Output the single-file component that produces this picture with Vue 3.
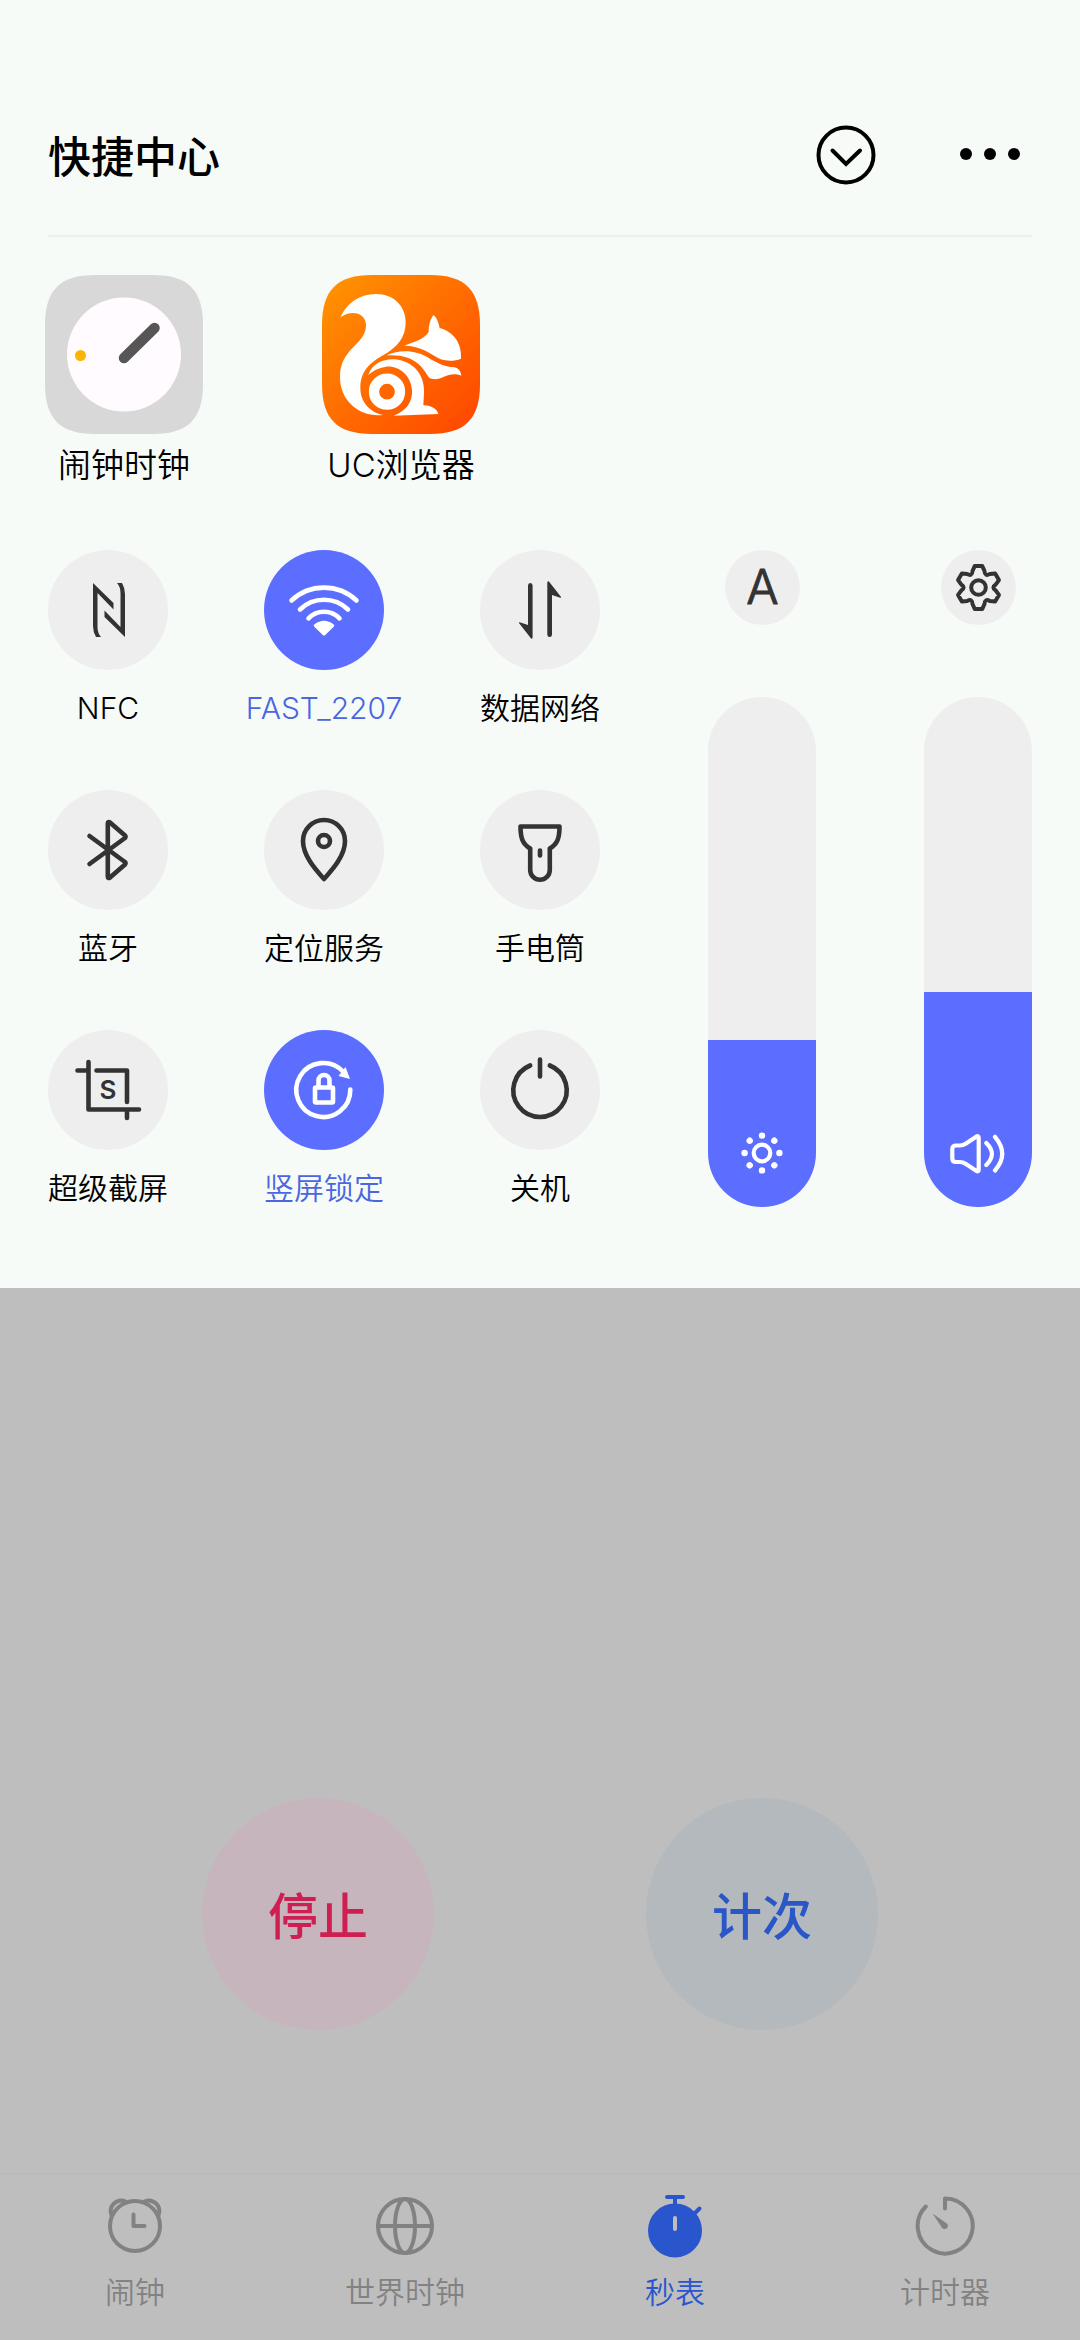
<script setup>
import { ref } from 'vue'

const tiles = ref([
  { id: 'nfc', label: 'NFC', on: false },
  { id: 'wifi', label: 'FAST_2207', on: true },
  { id: 'data', label: '数据网络', on: false },
  { id: 'bluetooth', label: '蓝牙', on: false },
  { id: 'location', label: '定位服务', on: false },
  { id: 'torch', label: '手电筒', on: false },
  { id: 'capture', label: '超级截屏', on: false },
  { id: 'rotation', label: '竖屏锁定', on: true },
  { id: 'power', label: '关机', on: false }
])

const brightness = ref(167)
const volume = ref(215)
const sliderMax = 510
const fill = (value) => ({ '--fill': (value / sliderMax) * 100 + '%' })

const tabs = [
  { id: 'alarm', label: '闹钟' },
  { id: 'world', label: '世界时钟' },
  { id: 'stopwatch', label: '秒表' },
  { id: 'timer', label: '计时器' }
]
const activeTab = ref('stopwatch')

// Six-toothed gear outline around the origin
const gearPath = (() => {
  const at = (x, y, k) => {
    const a = (k * Math.PI) / 3
    return `${(x * Math.cos(a) - y * Math.sin(a)).toFixed(2)} ${(x * Math.sin(a) + y * Math.cos(a)).toFixed(2)}`
  }
  let d = ''
  for (let k = 0; k < 6; k++) {
    d += `${k ? 'L' : 'M'}${at(-3.8, -21.4, k)}L${at(3.8, -21.4, k)}L${at(6, -16.5, k)}Q${at(6.2, -10.8, k)} ${at(11.3, -13.45, k)}`
  }
  return d + 'Z'
})()
</script>

<template>
  <div class="screen">
    <section class="panel">
      <header class="header">
        <h1>快捷中心</h1>
        <div class="actions">
          <button type="button" aria-label="收起">
            <svg width="60" height="60" viewBox="0 0 60 60" fill="none" stroke="#000" stroke-width="4">
              <circle cx="30" cy="30" r="27.5" />
              <path d="M16.5 25.5L30 39L44 25.5" stroke-linecap="round" />
            </svg>
          </button>
          <button type="button" aria-label="更多">
            <svg width="60" height="60" viewBox="0 0 60 60">
              <circle cx="6" cy="29" r="6" /><circle cx="30" cy="29" r="6" /><circle cx="54" cy="29" r="6" />
            </svg>
          </button>
        </div>
      </header>

      <nav class="apps">
        <a class="app" href="#clock">
          <svg width="158" height="159" viewBox="0 0 158 159">
            <path d="M0 50C0 15 15 0 50 0H108C143 0 158 15 158 50V109C158 144 143 159 108 159H50C15 159 0 144 0 109Z" fill="#d8d8d8" />
            <circle cx="79" cy="79.500" r="57" fill="#fffbff" />
            <path d="M79 83L109.500 53" stroke="#555655" stroke-width="10.500" stroke-linecap="round" />
            <circle cx="35.500" cy="80.500" r="5.500" fill="#fbb409" />
          </svg>
          <span>闹钟时钟</span>
        </a>
        <a class="app" href="#browser">
          <svg width="158" height="159" viewBox="66 46 474 477">
            <defs>
              <linearGradient id="orange" x1="0" y1="0" x2="1" y2="1">
                <stop offset="0.05" stop-color="#ff9200" />
                <stop offset="0.5" stop-color="#ff6c00" />
                <stop offset="0.95" stop-color="#ff4800" />
              </linearGradient>
            </defs>
            <path d="M66 196C66 91 111 46 216 46H390C495 46 540 91 540 196V373C540 478 495 523 390 523H216C111 523 66 478 66 373Z" fill="url(#orange)" />
            <g fill="#fff">
              <path d="M121 173C142 128 180 103 228 103C282 103 317 140 317 188C317 235 290 261 262 279C220 303 181 325 181 385C181 425 208 458 250 466C180 474 120 425 120 352C120 265 198 255 198 197C198 160 155 148 121 173Z" />
              <path d="M312 258C345 246 375 237 386 216C386 195 392 175 401 166C411 175 416 190 419 205C460 216 486 250 483 297C465 305 440 305 422 299C390 283 365 258 312 258Z" />
              <path d="M260 287C300 268 350 272 385 294C420 315 438 321 460 322C476 324 483 336 484 348C465 340 448 344 432 351C418 359 400 361 388 355C368 325 348 283 260 287Z" />
              <path d="M205 346C218 310 250 297 285 299C340 305 375 345 372 400L370 437C395 436 412 450 415 463L280 468C320 455 338 425 336 392C333 345 295 317 258 321C235 325 218 333 205 346Z" />
            </g>
            <circle cx="261" cy="396" r="39" fill="none" stroke="#fff" stroke-width="31" />
          </svg>
          <span>UC浏览器</span>
        </a>
      </nav>

      <div class="controls">
        <div class="tiles">
          <button
            v-for="tile in tiles"
            :key="tile.id"
            type="button"
            class="tile"
            :class="{ on: tile.on }"
            :aria-pressed="tile.on"
            @click="tile.on = !tile.on"
          >
            <svg class="disc" viewBox="0 0 120 120">
              <g v-if="tile.id === 'nfc'" class="solid">
                <path d="M45 33L65.500 53V59.500L49.500 43V77Q49.500 83 53 87H48Q45 82 45 76Z" />
                <path d="M45 33L65.500 53V59.500L49.500 43V77Q49.500 83 53 87H48Q45 82 45 76Z" transform="rotate(180 61 60)" />
              </g>
              <g v-else-if="tile.id === 'wifi'">
                <path d="M27.500 50.500A47.500 47.500 0 0 1 92.500 50.500M36 59.500A34.500 34.500 0 0 1 84 59.500M44.500 68.300A21.500 21.500 0 0 1 75.500 68.300" />
                <path class="solid" d="M50.300 76.800Q49 75.500 50.300 74.500Q60 67 69.700 74.500Q71 75.500 69.700 76.800L61 85.200Q60 86 59 85.200Z" />
              </g>
              <g v-else-if="tile.id === 'data'" class="solid">
                <path d="M48 35.500Q48 33 50.300 33Q52.600 33 52.600 35.500V87.500Q52 90 50.300 87.500L39.300 73.500Q38.200 71.500 40.500 72.500L48 75Z" />
                <path d="M67.300 32.500Q68 30 69.700 32.500L80.700 46.500Q81.800 48.500 79.500 47.500L72 45V84.500Q72 87 69.700 87Q67.300 87 67.300 84.500Z" />
              </g>
              <path v-else-if="tile.id === 'bluetooth'" d="M41.500 46L77 72Q78 73.300 77 74.500L62 87.500Q59.800 89 59.800 86.500V33.500Q59.800 31 62 32.500L77 45.500Q78 46.700 77 48L41.500 74" />
              <g v-else-if="tile.id === 'location'">
                <path d="M60 89C52 80 39 66 39 51A21 21 0 0 1 81 51C81 66 68 80 60 89Z" />
                <circle cx="60" cy="51" r="6" />
              </g>
              <g v-else-if="tile.id === 'torch'">
                <path d="M40.500 36.500H79.500C79.500 48 77.500 54 69.800 58.500V80A9.800 9.800 0 0 1 50.200 80V58.500C42.500 54 40.500 48 40.500 36.500Z" />
                <path d="M60 60.500V65.500" />
              </g>
              <g v-else-if="tile.id === 'capture'">
                <path d="M29.500 40.500H38M40.500 32V79.500H91M48.500 40.500H79V72M79 82V88" />
                <text x="60" y="69" text-anchor="middle">S</text>
              </g>
              <g v-else-if="tile.id === 'rotation'">
                <path d="M86.300 59.500A27 27 0 1 1 79 41.500" />
                <path class="solid" d="M81.500 37L86 49L74.500 46Z" />
                <rect x="51" y="57.500" width="18" height="15" rx="1" />
                <path d="M54.500 57V50.500A5.500 5.500 0 0 1 65.500 50.500V57" />
              </g>
              <path v-else d="M50.200 35.500A26.700 26.700 0 1 0 69.800 35.500M60 29.500V46.500" />
            </svg>
            <span>{{ tile.label }}</span>
          </button>
        </div>

        <div class="sliders">
          <div class="channel">
            <button type="button" class="mini" aria-label="自动亮度">
              <svg width="75" height="75" viewBox="0 0 75 75">
                <text class="auto" x="37.500" y="54" text-anchor="middle">A</text>
              </svg>
            </button>
            <div class="track">
              <input v-model.number="brightness" type="range" min="0" :max="sliderMax" :style="fill(brightness)" aria-label="亮度" />
              <svg class="glyph" width="60" height="48" viewBox="-30 -24 60 48">
                <circle r="8.300" fill="none" stroke="#fff" stroke-width="4.200" />
                <circle v-for="n in 8" :key="n" cx="17.400" r="3.200" fill="#fff" :transform="`rotate(${n * 45})`" />
              </svg>
            </div>
          </div>
          <div class="channel">
            <button type="button" class="mini" aria-label="设置">
              <svg width="75" height="75" viewBox="-37.500 -37.500 75 75" fill="none" stroke="#333" stroke-width="4" stroke-linejoin="round">
                <path :d="gearPath" />
                <circle r="7.300" />
              </svg>
            </button>
            <div class="track">
              <input v-model.number="volume" type="range" min="0" :max="sliderMax" :style="fill(volume)" aria-label="音量" />
              <svg class="glyph" width="60" height="48" viewBox="0 0 60 48" fill="none" stroke="#fff" stroke-width="4.200" stroke-linecap="round" stroke-linejoin="round">
                <path d="M4.300 20Q4.300 16.500 8 16.500H12Q15 16.500 18 14.500L28.500 7.500Q30.700 6.500 30.700 9V40.500Q30.700 43 28.500 42L18 35Q15 33 12 33H8Q4.300 33 4.300 29.500Z" />
                <path d="M38.300 14Q49.500 25 38.300 36M47 7.800Q61.500 25 47 41.500" />
              </svg>
            </div>
          </div>
        </div>
      </div>
    </section>

    <main class="stopwatch">
      <button type="button" class="round stop">停止</button>
      <button type="button" class="round lap">计次</button>
    </main>

    <nav class="tabs">
      <a
        v-for="tab in tabs"
        :key="tab.id"
        :href="'#' + tab.id"
        :class="{ active: tab.id === activeTab }"
        @click.prevent="activeTab = tab.id"
      >
        <svg width="64" height="64" viewBox="0 0 64 64">
          <g v-if="tab.id === 'alarm'">
            <circle cx="32" cy="32" r="25" />
            <path d="M8.500 21A10.500 10.500 0 0 1 22.500 7.500M55.500 21A10.500 10.500 0 0 0 41.500 7.500M30.500 20.500V32H41.500" />
          </g>
          <g v-else-if="tab.id === 'world'">
            <circle cx="32" cy="32" r="27" />
            <ellipse cx="32" cy="32" rx="10" ry="27" />
            <path d="M5 32H59" />
          </g>
          <g v-else-if="tab.id === 'stopwatch'">
            <circle cx="32" cy="36.500" r="25" fill="currentColor" />
            <path d="M24 3H40M32 3V12M51 20L56.500 14.500" />
            <path d="M32 24V35" stroke="#bebebe" />
          </g>
          <g v-else>
            <path d="M32 14.500V4.500A27.500 27.500 0 1 1 12.800 12.500" />
            <path d="M19.500 19.500L34.500 30Q35.800 32.500 34 34.300Q32 35.800 29.500 34.500Z" fill="currentColor" stroke="none" />
          </g>
        </svg>
        <span>{{ tab.label }}</span>
      </a>
    </nav>
  </div>
</template>

<style>
body {
  background: #bebebe;
}
</style>

<style scoped>
.screen {
  display: flex;
  flex-direction: column;
  min-height: 100vh;
  background: #bebebe;
  font-family: Inter, "Noto Sans CJK SC", sans-serif;
}

button {
  padding: 0;
  border: 0;
  background: none;
  font: inherit;
  color: inherit;
  cursor: pointer;
}

a {
  color: inherit;
  text-decoration: none;
}

svg {
  display: block;
}

.panel {
  padding-bottom: 80px;
  background: #f7fbf8;
  color: #000;
}

.header {
  display: flex;
  align-items: center;
  justify-content: space-between;
  height: 161px;
  margin: 0 48px;
  padding-top: 74px;
  border-bottom: 2px solid #eeeeec;
}

.header h1 {
  margin: 0;
  padding-top: 4px;
  font-size: 43px;
  line-height: 60px;
  font-weight: 500;
}

.actions {
  display: flex;
  gap: 84px;
  padding-right: 12px;
}

.apps {
  display: flex;
  gap: 119px;
  padding: 38px 45px 0;
}

.app {
  display: flex;
  flex-direction: column;
  align-items: center;
  gap: 11px;
  font-size: 33px;
  line-height: 40px;
  font-weight: 350;
  white-space: nowrap;
}

.controls {
  display: flex;
  align-items: flex-start;
  padding-top: 65px;
}

.tiles {
  display: grid;
  grid-template-columns: repeat(3, 1fr);
  row-gap: 62px;
  width: 60%;
}

.tile {
  display: flex;
  flex-direction: column;
  align-items: center;
  gap: 18px;
  font-size: 30px;
  line-height: 40px;
  font-weight: 350;
  white-space: nowrap;
}

.disc {
  width: 120px;
  height: 120px;
  border-radius: 50%;
  background: #eeeeee;
  color: #333;
  fill: none;
  stroke: currentColor;
  stroke-width: 4.6;
  stroke-linecap: round;
  stroke-linejoin: round;
}

.disc .solid {
  fill: currentColor;
  stroke: none;
}

.disc text {
  fill: currentColor;
  stroke: none;
  font-size: 26px;
  font-weight: 600;
}

.tile.on {
  color: #4a66e0;
}

.tile.on .disc {
  background: #5b6eff;
  color: #fff;
}

.sliders {
  display: flex;
  flex: 1;
  justify-content: space-between;
  padding: 0 48px 0 60px;
}

.channel {
  display: flex;
  flex-direction: column;
  align-items: center;
  gap: 72px;
}

.mini {
  border-radius: 50%;
  background: #eeeeee;
}

.auto {
  fill: #333;
  stroke: #333;
  stroke-width: 1;
  stroke-linejoin: round;
  font-size: 48px;
  font-weight: 300;
}

.track {
  position: relative;
  width: 108px;
  height: 510px;
}

.track input {
  display: block;
  width: 100%;
  height: 100%;
  margin: 0;
  border-radius: 54px;
  appearance: none;
  writing-mode: vertical-lr;
  direction: rtl;
  background: linear-gradient(to top, #5b6eff var(--fill), #eeeeee var(--fill));
}

.track input::-webkit-slider-thumb {
  appearance: none;
  width: 108px;
  height: 8px;
  background: transparent;
}

.glyph {
  position: absolute;
  left: 24px;
  bottom: 30px;
  pointer-events: none;
}

.stopwatch {
  display: flex;
  flex: 1;
  align-items: flex-end;
  justify-content: center;
  gap: 212px;
  padding: 80px 0 143px;
}

.round {
  width: 232px;
  height: 232px;
  padding-bottom: 3px;
  border-radius: 50%;
  font-size: 50px;
  font-weight: 500;
}

.stop {
  background: #c7b5be;
  color: #cf1f52;
}

.lap {
  background: #b3b9bc;
  color: #2b56c8;
}

.tabs {
  display: grid;
  grid-template-columns: repeat(4, 1fr);
  padding: 20px 0 28px;
  border-top: 1px solid #b9b9b9;
  color: #828282;
}

.tabs a {
  display: flex;
  flex-direction: column;
  align-items: center;
  gap: 14px;
  font-size: 30px;
  line-height: 40px;
  font-weight: 350;
}

.tabs svg {
  fill: none;
  stroke: currentColor;
  stroke-width: 4;
  stroke-linecap: round;
  stroke-linejoin: round;
}

.tabs .active {
  color: #2956cc;
}
</style>
